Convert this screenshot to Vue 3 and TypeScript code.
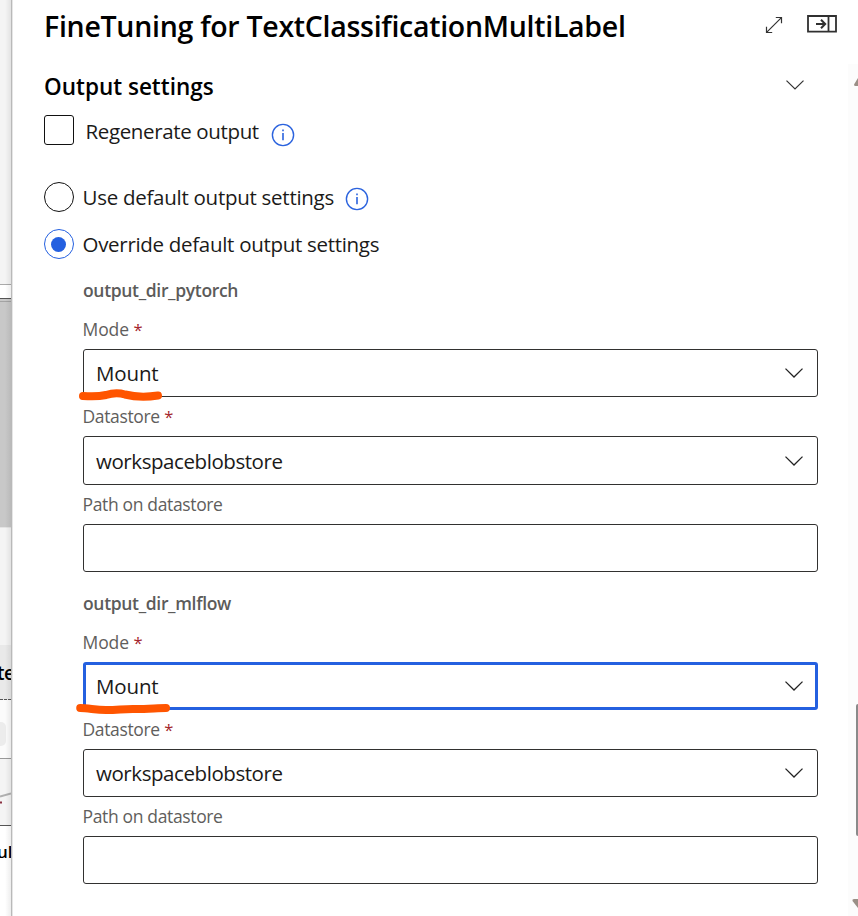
<script setup lang="ts">
interface Field {
  label: string
  value: string
  kind: 'select' | 'text'
  required?: boolean
  focused?: boolean
  tall?: boolean
  mark?: string
}

interface OutputGroup {
  name: string
  fields: Field[]
}

const groups: OutputGroup[] = [
  {
    name: 'output_dir_pytorch',
    fields: [
      {
        label: 'Mode', value: 'Mount', kind: 'select', required: true,
        mark: 'M8 12 C16 12.6 24 12.6 31 11 C38 8.7 43 8.3 50 10.5 C60 13 73 13 83 11.5',
      },
      { label: 'Datastore', value: 'workspaceblobstore', kind: 'select', required: true, tall: true },
      { label: 'Path on datastore', value: '', kind: 'text' },
    ],
  },
  {
    name: 'output_dir_mlflow',
    fields: [
      {
        label: 'Mode', value: 'Mount', kind: 'select', required: true, focused: true,
        mark: 'M4.2 11 C13 11 20 13.2 31 13 C42 13 49 11.6 60 12 C72 12 82 11 90 11',
      },
      { label: 'Datastore', value: 'workspaceblobstore', kind: 'select', required: true },
      { label: 'Path on datastore', value: '', kind: 'text' },
    ],
  },
]
</script>

<template>
  <div class="screen">
    <aside class="backdrop">
      <div class="seg s1"></div>
      <div class="seg s2"></div>
      <div class="seg s3"></div>
      <div class="seg s4"></div>
      <div class="seg s5"><span>te</span></div>
      <div class="seg s6"><i></i></div>
      <div class="seg s7">
        <svg width="11" height="66" viewBox="0 0 11 66">
          <path d="M0 37.5 L11 34.5" stroke="#b0b0b0" stroke-width="2" fill="none" />
          <path d="M0 43.5 H2" stroke="#8a3040" stroke-width="2" />
        </svg>
      </div>
      <div class="seg s8"><span>ul</span></div>
    </aside>

    <main class="panel">
      <header class="head">
        <h1>FineTuning for TextClassificationMultiLabel</h1>
        <div class="actions">
          <svg width="18" height="18" viewBox="0 0 18 18" fill="none" stroke="#333" stroke-width="1.2">
            <path d="M1.6 16.4 L16.4 1.6 M10.8 1.5 H16.5 V7.2 M1.5 10.8 V16.5 H7.2" />
          </svg>
          <svg width="30" height="18" viewBox="0 0 30 18" fill="none" stroke="#303030" stroke-width="1.8">
            <path d="M1 1 H29 V16.6 H1 Z M21.5 1 V16.6" />
            <path d="M9 9 H18 M14 4.8 L18.2 9 L14 13.2" stroke-width="2" />
          </svg>
        </div>
      </header>

      <div class="body">
        <section class="content">
          <div class="section-head">
            <h2>Output settings</h2>
            <svg width="18" height="10" viewBox="0 0 18 10" fill="none" stroke="#333" stroke-width="1.2">
              <path d="M.5 .6 L9 9 L17.5 .6" />
            </svg>
          </div>

          <div class="choice regen">
            <span class="box"></span>
            <span class="text t-regen">Regenerate output</span>
            <svg class="info low" width="24" height="24" viewBox="0 0 24 24" fill="none" stroke="#2b63de">
              <circle cx="12" cy="12" r="10.6" stroke-width="1.4" />
              <path d="M12 10 V17.3 M12 6.5 V8.3" stroke-width="1.6" />
            </svg>
          </div>

          <div class="choice use">
            <span class="radio"></span>
            <span class="text t-use">Use default output settings</span>
            <svg class="info" width="24" height="24" viewBox="0 0 24 24" fill="none" stroke="#2b63de">
              <circle cx="12" cy="12" r="10.6" stroke-width="1.4" />
              <path d="M12 10 V17.3 M12 6.5 V8.3" stroke-width="1.6" />
            </svg>
          </div>

          <div class="choice override">
            <span class="radio on"></span>
            <span class="text t-over">Override default output settings</span>
          </div>

          <div v-for="g in groups" :key="g.name" class="group">
            <h3>{{ g.name }}</h3>
            <template v-for="f in g.fields" :key="f.label">
              <label :class="{ short: f.label.length < 5 }">{{ f.label }}<b v-if="f.required">*</b></label>
              <div class="field" :class="{ focused: f.focused, tall: f.tall }">
                <span class="value" :class="{ long: f.value.length > 5 }">{{ f.value }}</span>
                <svg v-if="f.kind === 'select'" width="18" height="10" viewBox="0 0 18 10" fill="none" stroke="#222" stroke-width="1.3">
                  <path d="M.5 .6 L9 9 L17.5 .6" />
                </svg>
                <svg v-if="f.mark" class="mark" width="100" height="24" viewBox="0 0 100 24" fill="none">
                  <path :d="f.mark" stroke="#ff5500" stroke-width="8" stroke-linecap="round" stroke-linejoin="round" />
                </svg>
              </div>
            </template>
          </div>
        </section>

        <div class="scroll">
          <svg width="10" height="9" viewBox="0 0 10 9"><path d="M10 0 L6 6.5 Q6 8 7.5 8 H10 Z" fill="#9a8f86" /></svg>
          <div class="thumb"></div>
          <svg width="10" height="9" viewBox="0 0 10 9"><path d="M10 9 L4.5 2 Q4 0 6 0 H10 Z" fill="#9a8f86" /></svg>
        </div>
      </div>
    </main>
  </div>
</template>

<style>
body { background: #fff; overflow: hidden; }
</style>

<style scoped>
* { box-sizing: border-box; }
.screen {
  display: flex;
  width: 858px;
  height: 916px;
  overflow: hidden;
  font-family: "Open Sans", "Noto Sans", sans-serif;
  color: #1b1a19;
  white-space: nowrap;
}
svg { display: block; flex: none; }
h1, h2, h3 { margin: 0; font-weight: 600; }

.backdrop {
  position: relative;
  width: 11px;
  flex: none;
  display: flex;
  flex-direction: column;
  overflow: hidden;
}
.backdrop::after {
  content: "";
  position: absolute;
  inset: 0 0 0 5px;
  background: linear-gradient(90deg, transparent, rgba(0, 0, 0, .07));
}
.seg { flex: none; overflow: hidden; }
.seg span { display: block; font-weight: 600; color: #000; }
.s1 { height: 285px; background: #f4f4f4; border-bottom: 1px solid #aaa; }
.s2 { height: 14px; background: #fff; border-bottom: 1px solid #555; }
.s3 { height: 229px; background: linear-gradient(#c8c8c8 2px, #a4a4a4 2px, #a4a4a4 3px, #c8c8c8 3px); border-bottom: 1px solid #e4e4e4; }
.s4 { height: 117px; background: #f4f4f4; }
.s5 { height: 55px; background: #e9e9e9; border-bottom: 1px dashed #555; }
.s5 span { font-size: 19px; line-height: 56px; margin-left: -3px; letter-spacing: -.5px; }
.s6 { height: 59px; background: #fbfbfb; border-bottom: 1px solid #999; padding-top: 22px; }
.s6 i { display: block; width: 6px; height: 24px; background: #ececec; border-radius: 0 5px 5px 0; }
.s7 { height: 67px; background: #f4f4f4; border-bottom: 1px solid #555; }
.s8 { height: 90px; background: #fff; }
.s8 span { font-size: 17px; line-height: 51px; margin-left: -3px; }

.panel {
  flex: 1;
  min-width: 0;
  background: #fff;
  border-left: 1px solid #b9b9b9;
  box-shadow: inset 1px 0 #e6e6e6;
  display: flex;
  flex-direction: column;
}
.head {
  height: 64px;
  padding: 0 21px 0 32px;
  display: flex;
  justify-content: space-between;
}
.head h1 { font-size: 28.5px; line-height: 52px; letter-spacing: -.28px; color: #000; }
.actions { display: flex; gap: 24px; padding-top: 16px; }
.actions svg:last-child { margin-top: -1px; }

.body { flex: 1; display: flex; }
.content { width: 836px; padding-left: 32px; }
.section-head {
  display: flex;
  justify-content: space-between;
  align-items: center;
  height: 42px;
  padding-right: 44px;
}
.section-head h2 { font-size: 22.5px; line-height: 38px; padding-top: 4px; color: #000; }

.choice { display: flex; align-items: center; height: 30px; }
.regen { margin-top: 9px; }
.use { margin-top: 37px; }
.override { margin-top: 17px; margin-bottom: 12px; }
.box { width: 30px; height: 30px; border: 1px solid #111; border-radius: 3px; }
.radio {
  width: 30px;
  height: 30px;
  border: 1px solid #111;
  border-radius: 50%;
  display: flex;
  align-items: center;
  padding-left: 6px;
}
.radio.on { border-color: #2460e0; }
.radio.on::after { content: ""; width: 15px; height: 15px; border-radius: 50%; background: #2460e0; }
.text { font-size: 20.5px; line-height: 28px; margin-left: 8.5px; }
.t-regen { margin-left: 11.5px; width: 174px; padding-top: 1px; letter-spacing: -.36px; }
.t-use { width: 251.5px; padding-bottom: 1px; letter-spacing: -.27px; }
.t-over { letter-spacing: -.3px; }
.info { margin: 4px 0 0 11px; }
.info.low { margin-top: 10px; }

.group { width: 735px; margin-left: 39px; margin-bottom: 12px; }
.group h3 { font-size: 17.5px; line-height: 39px; letter-spacing: -.33px; color: #5c5b5a; }
.group label { display: block; font-size: 17.5px; line-height: 39px; letter-spacing: -.35px; color: #605e5c; margin-left: -.5px; }
.group label.short { letter-spacing: -.1px; }
.group label b { font-weight: 400; color: #a4262c; margin-left: 4.5px; font-size: 16.5px; }
.field {
  position: relative;
  height: 48px;
  border: 1px solid #323130;
  border-radius: 3px;
  display: flex;
  align-items: center;
  justify-content: space-between;
  padding: 0 14px 0 12px;
}
.field.tall { height: 49px; }
.field.focused { border: 3px solid #2460e0; padding: 0 12px 0 10px; }
.value { font-size: 20.5px; line-height: 41px; padding-top: 1px; letter-spacing: -.15px; }
.value.long { letter-spacing: -.43px; }
.mark { position: absolute; left: -9px; bottom: -12px; }
.focused .mark { left: -10px; bottom: -14px; }

.scroll {
  width: 10px;
  background: #fcfcfc;
  display: flex;
  flex-direction: column;
  align-items: flex-end;
  justify-content: space-between;
  padding: 14px 0 8px;
}
.thumb { width: 2px; height: 132px; margin-top: 553px; background: #8a8a8a; border-radius: 2px 0 0 2px; }
</style>
